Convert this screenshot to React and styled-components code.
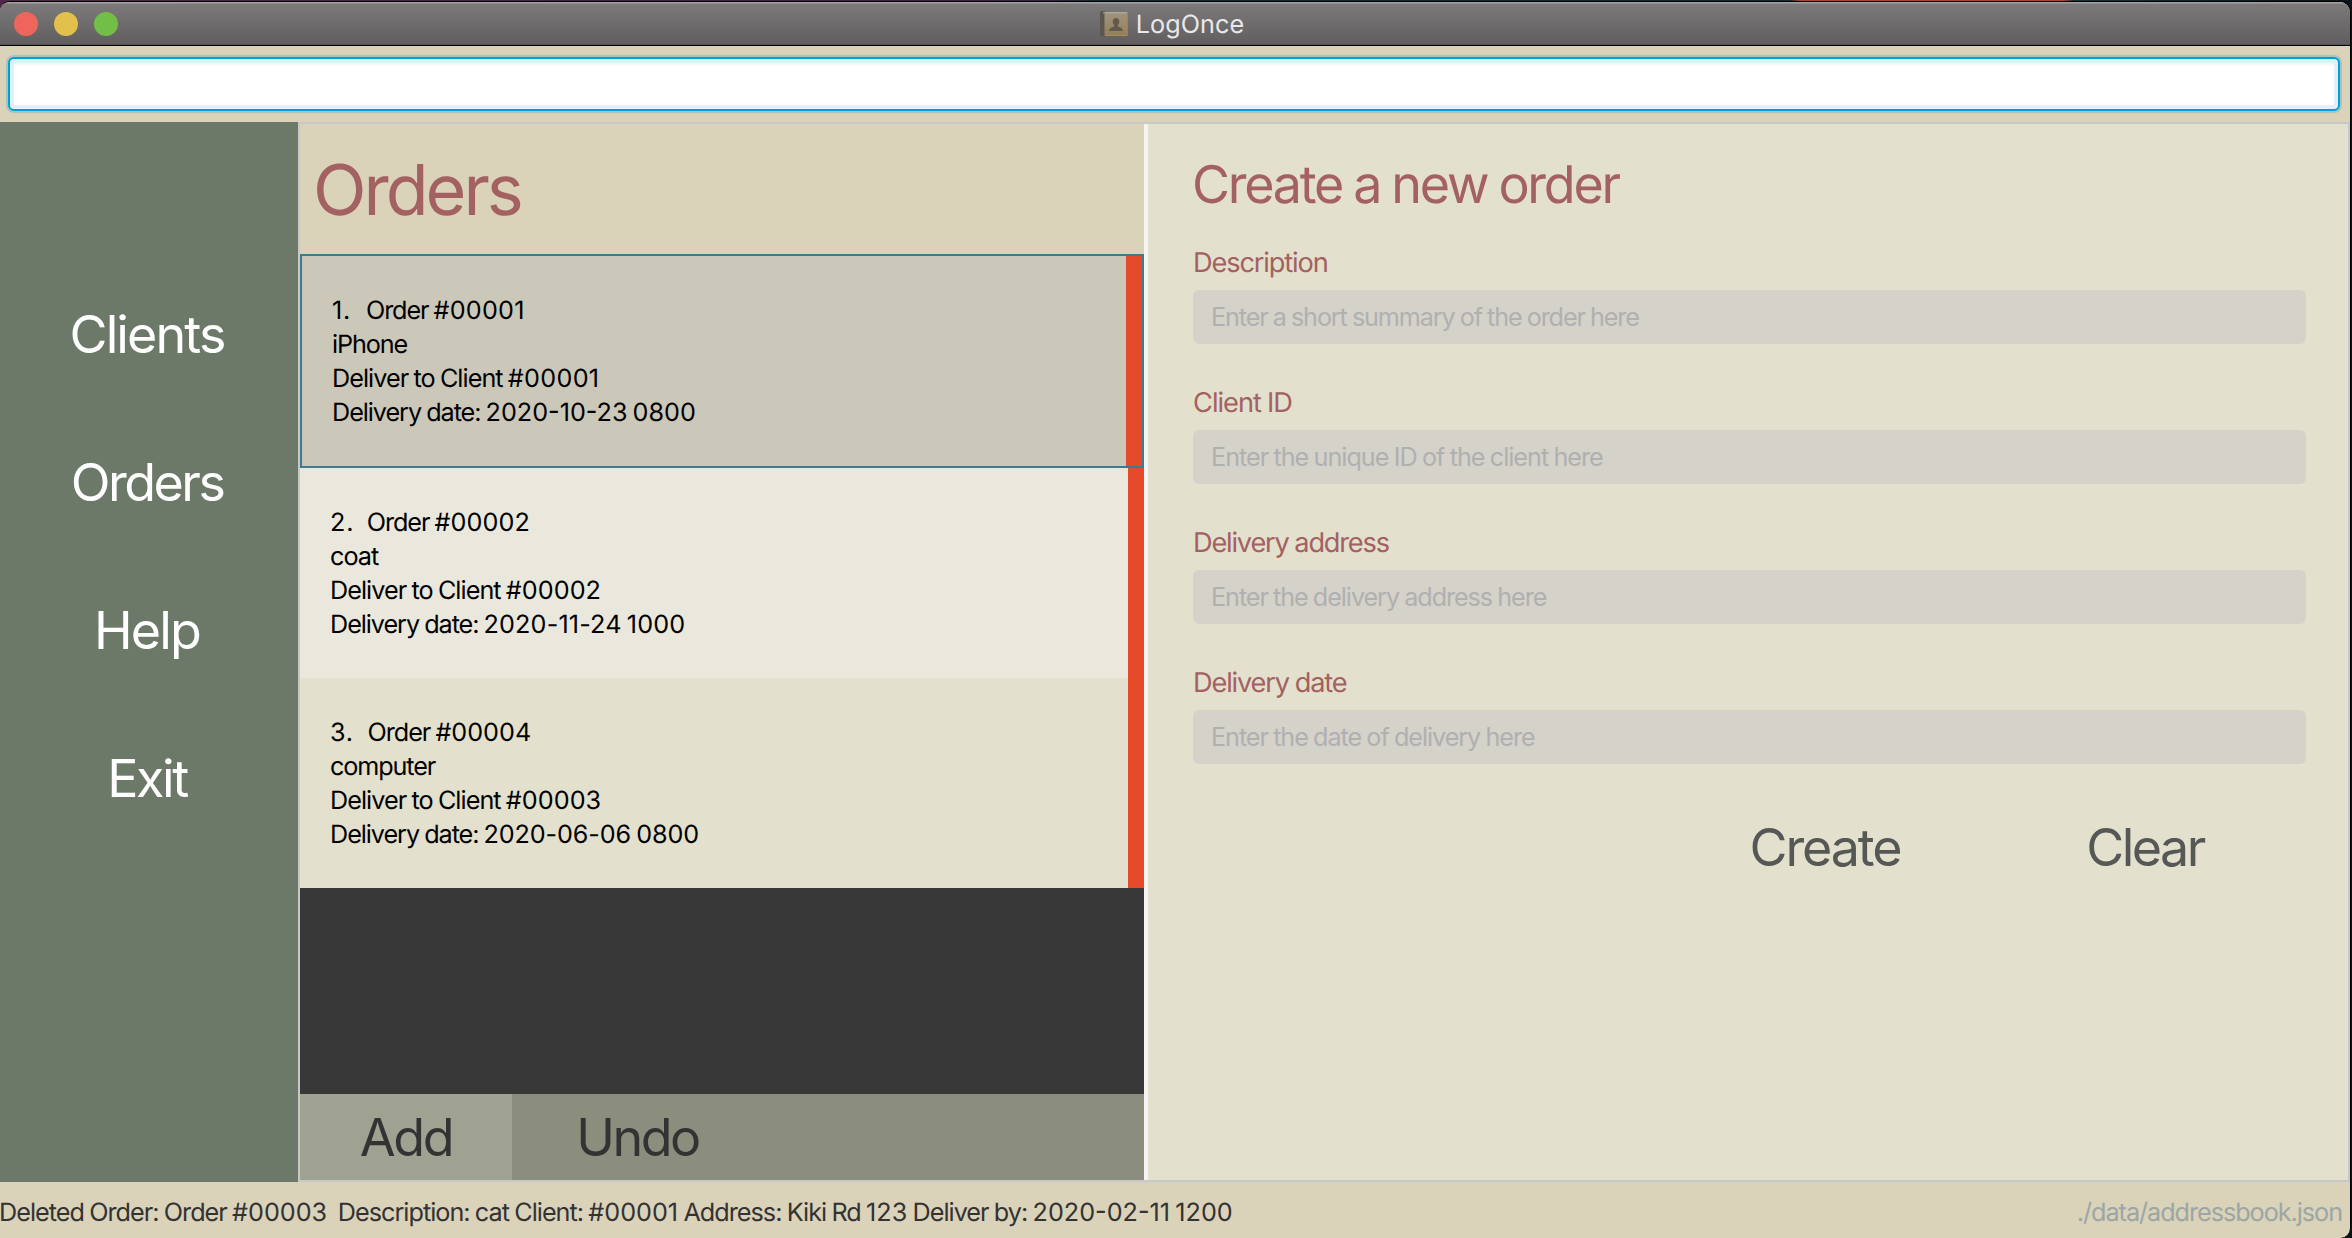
import React from "react";
import styled, { createGlobalStyle, css } from "styled-components";

const color = {
  tan: "#dad2b9",
  cream: "#e3e0ce",
  creamLight: "#eae8dc",
  selected: "#ccc8b9",
  focus: "#3e7b91",
  sidebar: "#6d7968",
  maroon: "#a36161",
  alert: "#e54b2b",
  dark: "#383838",
  rule: "#c8c8c8",
};

const Global = createGlobalStyle`
  *, *::before, *::after { box-sizing: border-box; }
  body {
    margin: 0;
    background: #0b1416;
    font-family: Inter, "Liberation Sans", sans-serif;
    text-rendering: geometricPrecision;
    overflow: hidden;
  }
  button, input { font: inherit; border: 0; margin: 0; padding: 0; background: none; }
`;

const Desktop = styled.div`
  width: 2352px;
  height: 1238px;
  padding: 1px 1px 0 0;
  background: linear-gradient(90deg, #4d2748 0, #3b2144 1050px, #12292d 1100px, #12292d 1790px, #a8452f 1800px, #a8452f 2064px, #16323a 2074px, #0b1416 2352px);
`;

const Window = styled.main`
  display: flex;
  flex-direction: column;
  height: 1237px;
  border-top: 1px solid #000;
  border-right: 1px solid #000;
  border-radius: 10px 11px 10px 0;
  overflow: hidden;
  background: ${color.tan};
`;

const TitleBar = styled.header`
  display: grid;
  grid-template-columns: 1fr auto 1fr;
  align-items: center;
  flex: none;
  height: 44px;
  padding: 1px 14px 0;
  border-bottom: 1px solid #000;
  background: linear-gradient(#a3a2a2 0, #a3a2a2 1px, #7b797a 2px, #605e5f 42px, #4b494a 43px);
`;

const Lights = styled.div`
  display: flex;
  gap: 16px;
`;

const Light = styled.span`
  width: 24px;
  height: 24px;
  border-radius: 50%;
  background: ${(p) => p.$fill};
`;

const AppName = styled.div`
  display: flex;
  align-items: center;
  gap: 8px;
  padding-right: 6px;
  color: #e9e8e9;
  font-size: 25.2px;
  line-height: 34px;
  letter-spacing: 0.1px;
`;

const AppLabel = styled.span`
  padding-top: 2px;
`;

const CommandBar = styled.div`
  display: flex;
  flex: none;
  height: 76px;
  padding: 11px 10px 11px 8px;
`;

const CommandInput = styled.input`
  && {
    flex: 1;
    border: 2px solid #039ed3;
    border-radius: 6px;
    background: #fff;
    outline: none;
    box-shadow: inset 0 0 0 4px #dff1fa, inset 0 6px 2px #f4f4f4, 0 0 0 2px rgba(3, 158, 211, 0.24);
  }
`;

const Workspace = styled.div`
  display: flex;
  flex: none;
  height: 1060px;
`;

const Sidebar = styled.nav`
  display: flex;
  flex-direction: column;
  flex: none;
  width: 298px;
  padding: 139px 4px 0 0;
  background: ${color.sidebar};
`;

const NavButton = styled.button`
  && {
    height: 148px;
    color: #fff;
    font-size: 52px;
    line-height: 64px;
    letter-spacing: ${(p) => p.$track}px;
    text-align: center;
  }
`;

const Content = styled.div`
  display: flex;
  flex: 1;
  border: 2px solid ${color.rule};
`;

const OrdersPane = styled.section`
  display: flex;
  flex-direction: column;
  flex: none;
  width: 844px;
`;

const PaneTitle = styled.h1`
  margin: 0;
  padding-left: 13px;
  height: 130px;
  color: ${color.maroon};
  font-size: 70px;
  font-weight: 400;
  line-height: 131px;
  letter-spacing: -3px;
`;

const OrderList = styled.ul`
  flex: 1;
  margin: 0;
  padding: 0;
  list-style: none;
  background: ${color.dark};
`;

const OrderCard = styled.div`
  height: 210px;
  padding: 38px 0 0 30px;
  border-right: 16px solid ${color.alert};
  background: ${(p) => (p.$alt ? color.creamLight : color.cream)};
  color: #000;
  font-size: 25.2px;
  line-height: 34px;
`;

const ListCell = styled.li`
  ${(p) =>
    p.$selected &&
    css`
      border: 2px solid ${color.focus};
      & > ${OrderCard} {
        background: ${color.selected};
      }
    `}
`;

const Line = styled.div`
  white-space: pre;
  word-spacing: -0.9px;
  letter-spacing: ${(p) => p.$track}px;
`;

const Digits = styled.span`
  letter-spacing: ${(p) => p.$track}px;
`;

const Index = styled.span`
  display: inline-block;
  width: ${(p) => p.$w}px;
  letter-spacing: 0.8px;
`;

const Actions = styled.footer`
  display: flex;
  height: 86px;
  background: #8b8e7d;
`;

const ActionButton = styled.button`
  && {
    width: ${(p) => p.$w}px;
    padding-top: 2px;
    color: #333;
    background: ${(p) => (p.$hover ? "#9fa290" : "none")};
    font-size: 52px;
    line-height: 84px;
    letter-spacing: ${(p) => p.$track}px;
  }
`;

const Divider = styled.div`
  flex: none;
  width: 4px;
  background: #f4f4f4;
`;

const FormPane = styled.form`
  flex: 1;
  padding: 29px 42px 0 45px;
  background: ${color.cream};
`;

const FormTitle = styled.h2`
  margin: 0 0 28px -1px;
  color: ${color.maroon};
  font-size: 52px;
  font-weight: 400;
  line-height: 64px;
  letter-spacing: -2.25px;
  word-spacing: -1.2px;
  white-space: nowrap;
`;

const Field = styled.label`
  display: flex;
  flex-direction: column;
  gap: 9px;
  margin-bottom: 41px;
  color: ${color.maroon};
  font-size: 27.2px;
  line-height: 36px;
  word-spacing: -0.7px;
  letter-spacing: ${(p) => p.$track}px;
`;

const TextField = styled.input`
  && {
    height: 54px;
    padding: 0 18px;
    border-radius: 6px;
    background: #d5d2ca;
    font-size: 25.2px;
    word-spacing: -0.8px;
    letter-spacing: ${(p) => p.$track}px;
  }
  &::placeholder {
    color: #b0b0b0;
    opacity: 1;
  }
`;

const FormActions = styled.div`
  display: flex;
  justify-content: flex-end;
  margin-top: 52px;
`;

const FormButton = styled.button`
  && {
    width: 320px;
    padding-right: 2px;
    color: #555855;
    font-size: 52px;
    line-height: 64px;
    letter-spacing: ${(p) => p.$track}px;
  }
`;

const StatusBar = styled.footer`
  display: flex;
  justify-content: space-between;
  flex: 1;
  padding: 6px 8px 0 0;
  color: #333;
  font-size: 25.2px;
  line-height: 50px;
`;

const Status = styled.span`
  margin-left: -1px;
  white-space: pre;
  word-spacing: -0.8px;
  letter-spacing: ${(p) => p.$track}px;
`;

const SavePath = styled(Status)`
  color: #9ba7a4;
`;

function BookIcon() {
  return (
    <svg width="28" height="26" viewBox="0 0 28 26">
      <defs>
        <linearGradient id="cover" x1="0" y1="0" x2="0" y2="1">
          <stop offset="0" stopColor="#a0947f" />
          <stop offset="1" stopColor="#937f58" />
        </linearGradient>
      </defs>
      <rect x="0" y="0" width="6" height="25.5" rx="1.5" fill="#5b5650" />
      <rect x="4.5" y="1" width="23" height="24" rx="0.8" fill="url(#cover)" />
      <path d="M3 1.8h24" stroke="#b5aea0" strokeWidth="1" />
      <path d="M27 2v22.5H5" fill="none" stroke="#a98b55" strokeWidth="1" />
      <path
        d="M16 7c2 0 3.300 1.500 3.300 3.500 0 1.600-.6 2.700-1.500 3.500v1.400c2.200.7 5 1.300 5 4.600H9.200c0-3.300 2.800-3.900 5-4.600V14c-.9-.8-1.500-1.900-1.500-3.500C12.700 8.500 14 7 16 7z"
        fill="#62594b"
      />
    </svg>
  );
}

const nav = [
  ["Clients", -1.9],
  ["Orders", -2.5],
  ["Help", -1.9],
  ["Exit", -2.4],
];

const orders = [
  {
    index: "1.",
    indexWidth: 34,
    selected: true,
    id: ["Order #00001", -1.1, 0.25],
    description: ["iPhone", -1.1],
    client: ["Deliver to Client #00001", -0.95, 0.3],
    date: ["Delivery date: 2020-10-23 0800", -1.05, 0],
  },
  {
    index: "2.",
    indexWidth: 36.7,
    alt: true,
    id: ["Order #00002", -1.05, 0.1],
    description: ["coat", -0.97],
    client: ["Deliver to Client #00002", -0.95, 0.05],
    date: ["Delivery date: 2020-11-24 1000", -1.05, 0.15],
  },
  {
    index: "3.",
    indexWidth: 37.6,
    id: ["Order #00004", -1.05, 0],
    description: ["computer", -1.11],
    client: ["Deliver to Client #00003", -0.95, 0.05],
    date: ["Delivery date: 2020-06-06 0800", -1.05, -0.12],
  },
];

const fields = [
  { label: ["Description", -1.13], hint: ["Enter a short summary of the order here", -1.12] },
  { label: ["Client ID", -0.98], hint: ["Enter the unique ID of the client here", -1] },
  { label: ["Delivery address", -1.2], hint: ["Enter the delivery address here", -1.07] },
  { label: ["Delivery date", -1.16], hint: ["Enter the date of delivery here", -1.05] },
];

function Figures({ text, track = 0 }) {
  return text
    .split(/(#?\d[\d-]*)/)
    .map((run, i) => (i % 2 ? <Digits key={i} $track={track}>{run}</Digits> : run));
}

function Order({ order }) {
  return (
    <ListCell $selected={order.selected}>
      <OrderCard $alt={order.alt}>
        <Line $track={order.id[1]}>
          <Index $w={order.indexWidth}>{order.index}</Index>
          <Figures text={order.id[0]} track={order.id[2]} />
        </Line>
        <Line $track={order.description[1]}>{order.description[0]}</Line>
        <Line $track={order.client[1]}>
          <Figures text={order.client[0]} track={order.client[2]} />
        </Line>
        <Line $track={order.date[1]}>
          <Figures text={order.date[0]} track={order.date[2]} />
        </Line>
      </OrderCard>
    </ListCell>
  );
}

export default function App() {
  return (
    <>
      <Global />
      <Desktop>
        <Window>
          <TitleBar>
            <Lights>
              <Light $fill="#ee665b" />
              <Light $fill="#e1c04c" />
              <Light $fill="#72bf47" />
            </Lights>
            <AppName>
              <BookIcon />
              <AppLabel>LogOnce</AppLabel>
            </AppName>
          </TitleBar>
          <CommandBar>
            <CommandInput />
          </CommandBar>
          <Workspace>
            <Sidebar>
              {nav.map(([name, track]) => (
                <NavButton key={name} $track={track}>{name}</NavButton>
              ))}
            </Sidebar>
            <Content>
              <OrdersPane>
                <PaneTitle>Orders</PaneTitle>
                <OrderList>
                  {orders.map((o) => (
                    <Order key={o.index} order={o} />
                  ))}
                </OrderList>
                <Actions>
                  <ActionButton $w={212} $track={-2.3} $hover>Add</ActionButton>
                  <ActionButton $w={251} $track={-2.5}>Undo</ActionButton>
                </Actions>
              </OrdersPane>
              <Divider />
              <FormPane>
                <FormTitle>Create a new order</FormTitle>
                {fields.map(({ label, hint }) => (
                  <Field key={label[0]} $track={label[1]}>
                    {label[0]}
                    <TextField placeholder={hint[0]} $track={hint[1]} />
                  </Field>
                ))}
                <FormActions>
                  <FormButton type="button" $track={-2.1}>Create</FormButton>
                  <FormButton type="button" $track={-2.55}>Clear</FormButton>
                </FormActions>
              </FormPane>
            </Content>
          </Workspace>
          <StatusBar>
            <Status $track={-0.98}>
              <Figures text="Deleted Order: Order #00003  Description: cat Client: #00001 Address: Kiki Rd 123 Deliver by: 2020-02-11 1200" />
            </Status>
            <SavePath $track={-1.03}>./data/addressbook.json</SavePath>
          </StatusBar>
        </Window>
      </Desktop>
    </>
  );
}
